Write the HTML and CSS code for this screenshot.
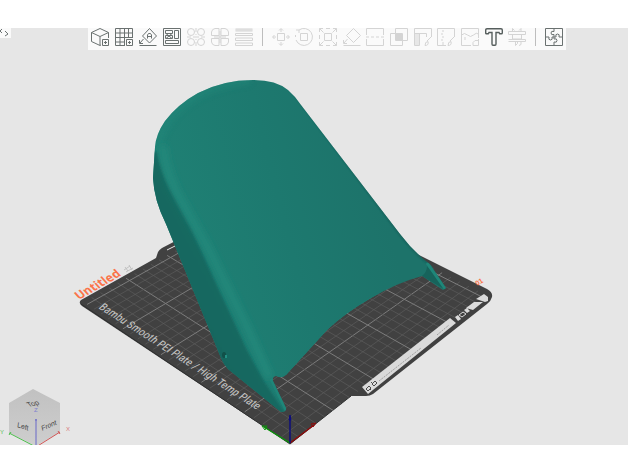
FILE: index.html
```html
<!DOCTYPE html>
<html lang="en">
<head>
<meta charset="utf-8">
<title>Untitled</title>
<link rel="stylesheet" href="styles.css">
</head>
<body>
<main class="workspace">
  <svg class="scene" viewBox="0 28 628 417" role="img" aria-label="Build plate with model">
    <defs>
      <linearGradient id="top" gradientUnits="userSpaceOnUse" x1="175" y1="200" x2="370" y2="150">
        <stop offset="0" stop-color="#1f8074"/><stop offset=".5" stop-color="#1d796f"/><stop offset="1" stop-color="#1d736a"/>
      </linearGradient>
      <linearGradient id="side" gradientUnits="userSpaceOnUse" x1="175" y1="270" x2="215" y2="250">
        <stop offset="0" stop-color="#18665f"/><stop offset="1" stop-color="#196b63"/>
      </linearGradient>
      <linearGradient id="cube" x1="0" y1="0" x2="0" y2="1">
        <stop offset="0" stop-color="#c1c1c1"/><stop offset="1" stop-color="#cecece"/>
      </linearGradient>
      <filter id="soft" x="-20%" y="-20%" width="140%" height="140%"><feGaussianBlur stdDeviation="3"/></filter>
      <filter id="softer" x="-20%" y="-20%" width="140%" height="140%"><feGaussianBlur stdDeviation="1"/></filter>
      <clipPath id="body"><path d="M153 178L155 147Q156 134 165 121Q178 104 198 93Q223 80 253 80Q276 80 288 90Q295 96 301 105L400 234Q412 250 427 262Q431 264 434 270L446 288L443 290L422 276Q396 283 371 298Q345 313 327 330L286 375Q282 379 276 376Q272 377 273 381L286 408Q287 412 281 412L228 369Q224 365 221 358L166 224Q154 200 153 178Z"/></clipPath>
    </defs>

    <path class="plate" d="M81 300L156 258L158 252Q159 250 162 248L281 186L487 289Q493 292 492 297Q491 301 487 304L373 394Q370 396 366 396H351L290 444L82 306Q78 303 81 300Z"/>
    <path class="plate-edge" d="M81 304L290 444L351 396"/>
    <path class="plate-mark" d="M167 250L175 246"/>
    <g id="grid"></g>

    <path class="strip" d="M362 387L450 318L456 323L368 394Z"/>
    <g class="strip-ink">
      <path class="strip-code" d="M366 389l3-3 2 2-3 3zM372 384l3-3 2 2-3 3zM370 389l1 1M371 382l1 1"/>
      <path d="M379 381L421 348M437 335L449 325" stroke-dasharray="2 1"/>
    </g>
    <path class="strip" d="M455 317l3-2 3 4-3 2zM464 310l3-2 3 3-3 2zM466 308l8-6h9l-10 8zM476 299l8-5 4 3v4l-3 1z"/>
    <path class="strip-ring" d="M459 315l4-3 3 2-4 3z"/>

    <text class="plate-name" transform="translate(98 308) rotate(32.7) skewX(-16)">Bambu Smooth PEI Plate / High Temp Plate</text>
    <text class="project-name" transform="translate(79 300) rotate(-30) skewX(12)">Untitled</text>
    <path class="edit-mark" d="M124 270l6-4M126 272l7-4M125 267l3 4M129 265l3 5"/>
    <text class="plate-index" transform="translate(477 286) rotate(-30)">01</text>

    <g clip-path="url(#body)">
      <rect class="top" x="140" y="70" width="320" height="350"/>
      <path class="rim" d="M158 150Q158 132 175 113Q200 86 250 80"/>
      <path class="side" d="M150 150L157 152Q161 172 171 191L192 230L217 285L247 350L266 384L290 420H220L150 240Z"/>
      <path class="ridge" d="M163 146Q166 175 184 205L207 246L246 325L270 378"/>
      <path class="right-rim" d="M290 88L400 234Q412 250 427 262"/>
      <path class="tip" d="M271 379L286 410"/>
      <path class="notch" d="M422 276Q427 272 427 266L432 272L444 289Z"/>
      <path class="tip" d="M427 263L446 290"/>
      <path class="arch" d="M422 277Q396 284 371 298Q345 313 327 330L286 375"/>
    </g>
    <ellipse class="hole" cx="224" cy="355" rx="2" ry="3"/>
    <path class="hole-light" d="M226 355v3"/>

    <g class="axes">
      <path class="axis-y" d="M290 443L264 427"/>
      <path class="axis-y axis-head" d="M262 426l5 0-2 4z"/>
      <path class="axis-x" d="M290 443L314 425"/>
      <path class="axis-x axis-head" d="M316 423l-5 1 2 3z"/>
      <path class="axis-z" d="M290 443V418"/>
      <path class="axis-z axis-head" d="M290 415l1 5h-2z"/>
    </g>

    <g class="cube">
      <path class="cube-body" d="M33 389L60 403V432L36 446L9 433V403Z"/>
      <text transform="translate(29 407) rotate(-14) skewX(24)">Top</text>
      <text transform="translate(17 427) rotate(18) skewX(10)">Left</text>
      <text transform="translate(42 431) rotate(-24) skewX(-12)">Front</text>
      <path class="cube-y" d="M36 447L9 433m0 2l2-3"/>
      <path class="cube-x" d="M36 447L60 432m-2-1l2 3"/>
      <path class="cube-z" d="M36 447V419m-1 1h2"/>
      <text class="label-z" x="34" y="412">Z</text>
      <text class="label-x" x="66" y="431">X</text>
      <text class="label-y" x="0" y="434">Y</text>
    </g>
  </svg>

  <button class="collapse" aria-label="Toggle sidebar">
    <svg viewBox="0 0 11 10"><path d="M2 1L0 3l2 2M5 3l3 3-3 2"/></svg>
  </button>

  <div class="toolbar" role="toolbar" aria-label="Tools">
    <div class="group">
      <button aria-label="Add model"><svg viewBox="0 0 18 18"><path d="M10 17l-1 .5-8.500-4V4.500L9 .5l8.500 4V10M.5 4.500L9 8.500l8.500-4M9 8.500V17M11.500 11.500h6v6h-6zM14.500 13v3M13 14.500h3"/></svg></button>
      <button aria-label="Add plate"><svg viewBox="0 0 18 18"><path d="M10 17.500H.5V.5h17V10M.5 5h17M.5 9.500h17M.5 14H10M5 .5v17M9.500 .5v17M13.500 .5V10M11.500 11.500h6v6h-6zM14.500 13v3M13 14.500h3"/></svg></button>
      <button aria-label="Auto orient"><svg viewBox="0 0 18 18"><path d="M10.500 .5l7 7.500-7 7-7-7zM8.500 10.500V7l1-1.500h2l1 1.500v3.500M8.500 8.500h4M4.500 11L1 15M.5 12v3.500H4M.5 17.500h17"/></svg></button>
      <button aria-label="Arrange"><svg viewBox="0 0 18 18"><path d="M.5 .5h17v17H.5zM2.500 2.500h7v3h-7zM11.500 2.500h4v8h-4zM2.500 7.500h7v3h-7zM2.500 12.500h13v3h-13zM3 5.500l6 5M9 5.500l-6 5"/></svg></button>
      <button disabled aria-label="Split to objects"><svg viewBox="0 0 18 18"><circle cx="4" cy="4" r="3.500"/><circle cx="14" cy="4" r="3.500"/><circle cx="4" cy="14" r="3.500"/><circle cx="14" cy="14" r="3.500"/><path d="M9 0v4M9 6v1M9 11v1M9 14v4M0 9h4M6 9h6M14 9h4"/></svg></button>
      <button disabled aria-label="Split to parts"><svg viewBox="0 0 18 18"><path d="M8 .5v7H.5V4Q1 1 4 .5zM10 .5v7h7.500V4Q17 1 14 .5zM8 17.500v-7H.5V14q.5 3 3.500 3.500zM10 17.500v-7h7.500V14q-.5 3-3.500 3.500zM3 9h12M9 3v12"/></svg></button>
      <button disabled aria-label="Variable layer height"><svg viewBox="0 0 18 18"><path d="M.5 1h17M.5 2h17M.5 3h17M.5 5.500h17v2H.5zM.5 10h17v2.500H.5zM.5 15h17v2.500H.5z"/></svg></button>
    </div>
    <span class="separator"></span>
    <div class="group wide">
      <button disabled aria-label="Move"><svg viewBox="0 0 18 18"><path d="M5.500 5.500h7v7h-7zM9 4V1M7 2.500L9 .5l2 2M9 14v3M7 15.500l2 2 2-2M4 9H1M2.500 7L.5 9l2 2M14 9h3M15.500 7l2 2-2 2"/></svg></button>
      <button disabled aria-label="Rotate"><svg viewBox="0 0 18 18"><path d="M5.500 5.500h7v7h-7zM4 2A8.500 8.500 0 1 1 1 12M4 2H1M4 2v3M.5 9V7"/></svg></button>
      <button disabled aria-label="Scale"><svg viewBox="0 0 18 18"><path d="M5.500 5.500h7v7h-7zM4.500 4.500l-4-4M.5 4V.5H4M13.500 4.500l4-4M14 .5h3.500V4M4.500 13.500l-4 4M.5 14v3.500H4M13.500 13.500l4 4M14 17.500h3.500V14M7 .5h4M7 17.500h4M.5 7v4M17.500 7v4"/></svg></button>
      <button disabled aria-label="Lay on face"><svg viewBox="0 0 18 18"><path d="M10.500 .5l7 7-7 7-7-7zM4.500 11L1 15M.5 12v3.500H4M.5 17.500h17"/></svg></button>
      <button disabled aria-label="Cut"><svg viewBox="0 0 18 18"><path d="M.5 7V.5h17V7M.5 11v6.500h17V11M0 9h3M5 9h3M10 9h3M15 9h3"/></svg></button>
      <button disabled aria-label="Mesh boolean"><svg viewBox="0 0 18 18"><path d="M5.500 .5h12v12h-12zM.5 5.500h12v12H.5z"/><path class="hatch" d="M6 6h6v6H6z"/></svg></button>
      <button disabled aria-label="Supports"><svg viewBox="0 0 18 18"><path d="M.5 17.500V.5h17V9M.5 5.500h12V9M5.500 6v11.500h-5M2 6v11M4 6v11M17 9l-4 4M11 17.500q0-4 3-4 1 4-3 4"/></svg></button>
      <button disabled aria-label="Seam"><svg viewBox="0 0 18 18"><path d="M9 17.500H.5V.5h17V9M6 2v2M5 5v2M6 8v2M5 11v2M6 14v3M17 9l-4 4M11 17.500q0-4 3-4 1 4-3 4"/></svg></button>
      <button disabled aria-label="Color painting"><svg viewBox="0 0 18 18"><path d="M10 17.500H.5V.5h17V10M.5 7q3-3 6 0t6 0 5-1M4 9v3M17.500 11v6.500H12v-3l2-2h3.500"/></svg></button>
      <button aria-label="Text"><svg viewBox="0 0 18 18"><path class="bold" d="M2 .7h14q1.300 0 1.300 1.300v3q0 .8-1 .8h-1.600L14 4.500h-3V16q0 1.300-1 1.300H8Q7 17.300 7 16V4.500H4l-.7 1.300H1.700q-1 0-1-.8V2Q.7 .7 2 .7z"/></svg></button>
      <button disabled aria-label="Measure"><svg viewBox="0 0 18 18"><path d="M.5 3.500h17v3H.5zM4.500 3V.5l2 2M13 3V.5l-2 2M4.500 7v4h9V7M.5 11.500h17v2H.5M7.500 13.500v4l2-2v-2M13 13.500v3l-2 1"/></svg></button>
    </div>
    <span class="separator"></span>
    <button aria-label="Assembly view"><svg viewBox="0 0 18 18"><path d="M.5 .5h17v17H.5zM9 .5v3q-3-1-3 1.500T9 6.500V9M9 9v2q3-1 3 1.500T9 14v3.500M.5 9H4q-1 3 1.500 3T7 9h4q-1-3 1.500-3T14 9h3.500"/></svg></button>
  </div>
</main>
<script src="grid.js"></script>
</body>
</html>
```
FILE: styles.css
```css
* {
  box-sizing: border-box;
}

body {
  margin: 0;
  padding-top: 28px;
  background: #fff;
  font-family: "Liberation Sans", Arial, sans-serif;
}

.workspace {
  position: relative;
  background: #e6e6e6;
}

.scene {
  display: block;
  width: 100%;
  height: auto;
}

button {
  display: flex;
  justify-content: center;
  margin: 0;
  padding: 0;
  border: 0;
  background: none;
  color: #6a7170;
}

button:disabled {
  color: #d4d4d4;
}

button svg {
  display: block;
  width: 18px;
  height: 18px;
  fill: none;
  stroke: currentColor;
  stroke-width: 1;
}

.collapse {
  position: absolute;
  top: 0;
  left: 0;
  background: #fafafa;
}

.collapse svg {
  width: 11px;
  height: 10px;
}

.toolbar {
  position: absolute;
  top: 0;
  left: 88px;
  display: flex;
  height: 22px;
  background: #fafafa;
}

.toolbar button {
  width: 24px;
  height: 18px;
}

.group {
  display: flex;
}

.group.wide {
  width: 260px;
}

.wide button {
  flex: 1;
  min-width: 0;
}

.separator {
  flex: none;
  width: 1px;
  height: 18px;
  margin: 0 6px;
  background: #bdbdbd;
}

.hatch {
  fill: currentColor;
}

.bold {
  fill: #fafafa;
  stroke: #565e5d;
  stroke-width: 1.4;
}

.plate {
  fill: #414141;
}

.plate-edge {
  fill: none;
  stroke: #2f3030;
  stroke-width: 1;
}

.plate-mark {
  stroke: #e6e6e6;
  stroke-width: 1;
}

.line {
  fill: none;
  stroke: #5c5c5c;
  stroke-width: 0.7;
}

.line.major {
  stroke: #7c7c7c;
  stroke-width: 1;
}

.strip {
  fill: #dadada;
}

.strip-ink {
  fill: none;
  stroke: #a0a0a0;
  stroke-width: 1;
}

.strip-code {
  stroke: #4c4c4c;
}

.strip-ring {
  fill: none;
  stroke: #dadada;
}

.plate-name {
  fill: #c6c6c6;
  font-family: "Roboto Condensed", Roboto, sans-serif;
  font-size: 11px;
}

.project-name {
  fill: #fb7349;
  font-family: "Open Sans", sans-serif;
  font-size: 12px;
  font-weight: 700;
}

.plate-index {
  fill: #fb7349;
  font-size: 7px;
  font-weight: 700;
}

.edit-mark {
  fill: none;
  stroke: #c2c2c2;
}

.top {
  fill: url(#top);
}

.side {
  fill: url(#side);
  filter: url(#softer);
}

.rim,
.ridge {
  fill: none;
  stroke: #23897c;
  stroke-width: 7;
  filter: url(#soft);
}

.rim {
  opacity: 0.6;
}

.right-rim {
  fill: none;
  stroke: #175c55;
  stroke-width: 2;
  filter: url(#softer);
}

.tip {
  fill: none;
  stroke: #1f8679;
  stroke-width: 3;
}

.notch {
  fill: #17635b;
}

.arch {
  fill: none;
  stroke: #1c8075;
  stroke-width: 1;
}

.hole {
  fill: #125049;
}

.hole-light {
  fill: none;
  stroke: #239083;
  stroke-width: 2;
}

.axes path {
  fill: none;
  stroke-width: 1.4;
}

.axes .axis-x {
  stroke: #8f0a0a;
}

.axes .axis-y {
  stroke: #0a960a;
}

.axes .axis-z {
  stroke: #0a0a80;
}

.axes .axis-head {
  stroke-width: 1;
}

.cube text {
  fill: #444;
  font-size: 7px;
}

.cube-body {
  fill: url(#cube);
}

.cube-x,
.cube-y,
.cube-z {
  fill: none;
  stroke-width: 1;
}

.cube-x {
  stroke: #d05656;
}

.cube-y {
  stroke: #4fbf4f;
}

.cube-z {
  stroke: #6868c8;
}

.cube .label-x {
  fill: #d98080;
  font-size: 6px;
}

.cube .label-y {
  fill: #58c058;
  font-size: 6px;
}

.cube .label-z {
  fill: #8080d0;
  font-size: 6px;
}
```
FILE: grid.js
```js
// Projects the 256 mm bed grid (10 mm pitch, bold line each 50 mm) onto the scene.
const BED = 256;
const grid = document.getElementById("grid");

function project(x, y) {
  const u = x / BED;
  const v = y / BED;
  const w = 1 + 0.1757 * u + 0.1777 * v;
  return [
    (290 + 283.7 * u - 193.4 * v) / w,
    (444 - 97.2 * u - 88.3 * v) / w
  ].map((n) => n.toFixed(1)).join(" ");
}

function addLine(from, to, major) {
  const path = document.createElementNS("http://www.w3.org/2000/svg", "path");
  path.setAttribute("class", major ? "line major" : "line");
  path.setAttribute("d", `M${from}L${to}`);
  grid.append(path);
}

for (let mm = 10; mm < BED; mm += 10) {
  const major = mm % 50 === 0;
  addLine(project(mm, 1), project(mm, 255), major);
  addLine(project(1, mm), project(255, mm), major);
}
```
